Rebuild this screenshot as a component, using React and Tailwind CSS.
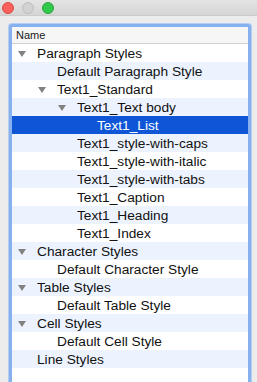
import React from "react";

const rows = [
  { label: "Paragraph Styles", level: 0, open: true },
  { label: "Default Paragraph Style", level: 1 },
  { label: "Text1_Standard", level: 1, open: true },
  { label: "Text1_Text body", level: 2, open: true },
  { label: "Text1_List", level: 3, selected: true },
  { label: "Text1_style-with-caps", level: 2 },
  { label: "Text1_style-with-italic", level: 2 },
  { label: "Text1_style-with-tabs", level: 2 },
  { label: "Text1_Caption", level: 2 },
  { label: "Text1_Heading", level: 2 },
  { label: "Text1_Index", level: 2 },
  { label: "Character Styles", level: 0, open: true },
  { label: "Default Character Style", level: 1 },
  { label: "Table Styles", level: 0, open: true },
  { label: "Default Table Style", level: 1 },
  { label: "Cell Styles", level: 0, open: true },
  { label: "Default Cell Style", level: 1 },
  { label: "Line Styles", level: 0 },
];

const indent = ["pl-[6px]", "pl-[26px]", "pl-[46px]", "pl-[66px]"];

function Tri() {
  return (
    <svg width="8" height="6" viewBox="0 0 8 6" className="mt-[2px]">
      <polygon points="0,0 8,0 4,6" fill="#828282" />
    </svg>
  );
}

export default function App() {
  return (
    <div
      className="w-[257px] h-[382px] overflow-hidden bg-[#ececec]"
      style={{ fontFamily: '"Liberation Sans", Arial, sans-serif' }}
    >
      <div className="h-[16px] flex items-center gap-2 pl-[2px] bg-gradient-to-b from-[#e4e4e4] to-[#d5d5d5] border-b border-[#cbcbcb]">
        <div className="w-3 h-3 rounded-full bg-[#fc605c] border border-[#de4a45]" />
        <div className="w-3 h-3 rounded-full bg-[#d2d2d2] border border-[#bdbdbd]" />
        <div className="w-3 h-3 rounded-full bg-[#34c84a] border border-[#27a93a]" />
      </div>
      <div className="ml-[8px] mt-[7px] w-[244px] h-[400px] rounded-[4px] bg-[#b3cdf3] p-[1px]">
        <div className="h-full rounded-[3px] border-[3px] border-[#86b0ee] bg-white">
          <div className="h-[17px] flex items-center pl-[4px] bg-[#f6f6f6] border-b border-[#cfcfcf] text-[11px] text-[#1a1a1a]">
            Name
          </div>
          {rows.map((r, i) => (
            <div
              key={i}
              className={
                "h-[18px] flex items-center text-[13.7px] " +
                indent[r.level] +
                " " +
                (r.selected
                  ? "bg-[#0f56d7] text-white"
                  : i % 2 === 1
                  ? "bg-[#edf3fe] text-[#111]"
                  : "bg-white text-[#111]")
              }
            >
              <div className="w-[8px] flex items-center">{r.open ? <Tri /> : null}</div>
              <span className="ml-[11px] pt-[2px] whitespace-nowrap leading-none">{r.label}</span>
            </div>
          ))}
        </div>
      </div>
    </div>
  );
}
